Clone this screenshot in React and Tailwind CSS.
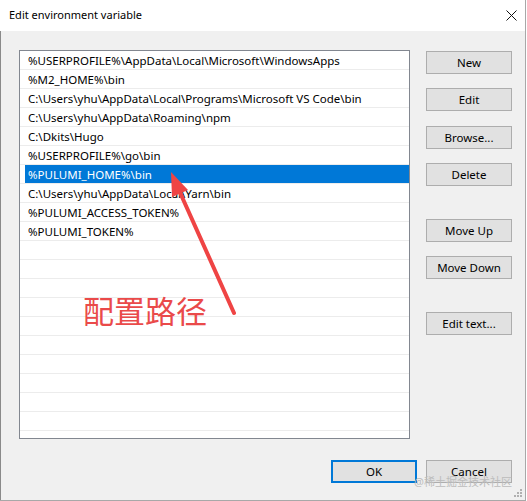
import React from 'react';

const paths = [
  '%USERPROFILE%\\AppData\\Local\\Microsoft\\WindowsApps',
  '%M2_HOME%\\bin',
  'C:\\Users\\yhu\\AppData\\Local\\Programs\\Microsoft VS Code\\bin',
  'C:\\Users\\yhu\\AppData\\Roaming\\npm',
  'C:\\Dkits\\Hugo',
  '%USERPROFILE%\\go\\bin',
  '%PULUMI_HOME%\\bin',
  'C:\\Users\\yhu\\AppData\\Local\\Yarn\\bin',
  '%PULUMI_ACCESS_TOKEN%',
  '%PULUMI_TOKEN%',
];

const rows = [...paths, ...Array(10).fill('')];

const Button = ({ children, className = '', focused = false }) => (
  <button
    className={`w-[86px] h-[23px] bg-[#e1e1e1] text-[11.5px] text-black flex items-center justify-center ${
      focused ? 'border-2 border-[#0078d7]' : 'border border-[#adadad]'
    } ${className}`}
  >
    {children}
  </button>
);

const App = () => {
  const selected = 6;

  return (
    <div
      className="w-[527px] h-[501px] bg-white relative overflow-hidden"
      style={{ fontFamily: '"Noto Sans", "Noto Sans CJK SC", sans-serif' }}
    >
      <div className="w-[526px] h-[501px] flex flex-col border-r border-b border-[#a8a8a8]">
        {/* Title bar */}
        <div className="h-[31px] bg-white flex items-center justify-between pl-[9px] pr-[8px] shrink-0">
          <span className="text-[11px] text-black">Edit environment variable</span>
          <svg width="11" height="11" viewBox="0 0 11 11">
            <path d="M0.5 0.5 L10.5 10.5 M10.5 0.5 L0.5 10.5" stroke="#111" strokeWidth="1" />
          </svg>
        </div>

        {/* Body */}
        <div className="flex-1 bg-[#f0f0f0] border-l border-[#8a8a8a] flex flex-col pl-[18px] pt-[19px]">
          <div className="flex">
            {/* Path list */}
            <div className="w-[391px] h-[389px] bg-white border border-[#828790] overflow-hidden">
              {rows.map((p, i) => (
                <div key={i} className="h-[19px] border-b border-[#ececec] flex">
                  <div
                    className={`ml-[5px] flex-1 pl-[3px] pt-[2px] flex items-center text-[11.5px] whitespace-nowrap ${
                      i === selected ? 'bg-[#0078d7] text-white' : 'text-black'
                    }`}
                  >
                    {p}
                  </div>
                </div>
              ))}
            </div>

            {/* Side buttons */}
            <div className="flex flex-col ml-[16px] pt-[1px]">
              <Button>New</Button>
              <Button className="mt-[14px]">Edit</Button>
              <Button className="mt-[15px]">Browse...</Button>
              <Button className="mt-[14px]">Delete</Button>
              <Button className="mt-[33px]">Move Up</Button>
              <Button className="mt-[14px]">Move Down</Button>
              <Button className="mt-[33px]">Edit text...</Button>
            </div>
          </div>

          {/* Footer buttons */}
          <div className="flex justify-end gap-[9px] mt-[21px] pr-[13px]">
            <Button focused>OK</Button>
            <Button>Cancel</Button>
          </div>
        </div>
      </div>

      {/* Annotation */}
      <div className="absolute left-[83px] top-[296px] text-[31px] leading-none text-[#ea4a4a]">
        配置路径
      </div>
      <svg className="absolute left-0 top-0 pointer-events-none" width="527" height="501">
        <line x1="234" y1="313" x2="178" y2="188" stroke="#ef4444" strokeWidth="4" strokeLinecap="round" />
        <polygon points="171,172 188,190 172,197" fill="#ef4444" />
      </svg>

      {/* Watermark */}
      <div className="absolute left-[414px] top-[476px] text-[11px] leading-none text-[#bcbcbc]">
        @稀土掘金技术社区
      </div>

      {/* Resize grip */}
      <svg className="absolute left-[514px] top-[489px]" width="9" height="9">
        <rect x="6" y="0" width="2" height="2" fill="#b0b0b0" />
        <rect x="3" y="3" width="2" height="2" fill="#b0b0b0" />
        <rect x="6" y="3" width="2" height="2" fill="#b0b0b0" />
        <rect x="0" y="6" width="2" height="2" fill="#b0b0b0" />
        <rect x="3" y="6" width="2" height="2" fill="#b0b0b0" />
        <rect x="6" y="6" width="2" height="2" fill="#b0b0b0" />
      </svg>
    </div>
  );
};

export default App;
